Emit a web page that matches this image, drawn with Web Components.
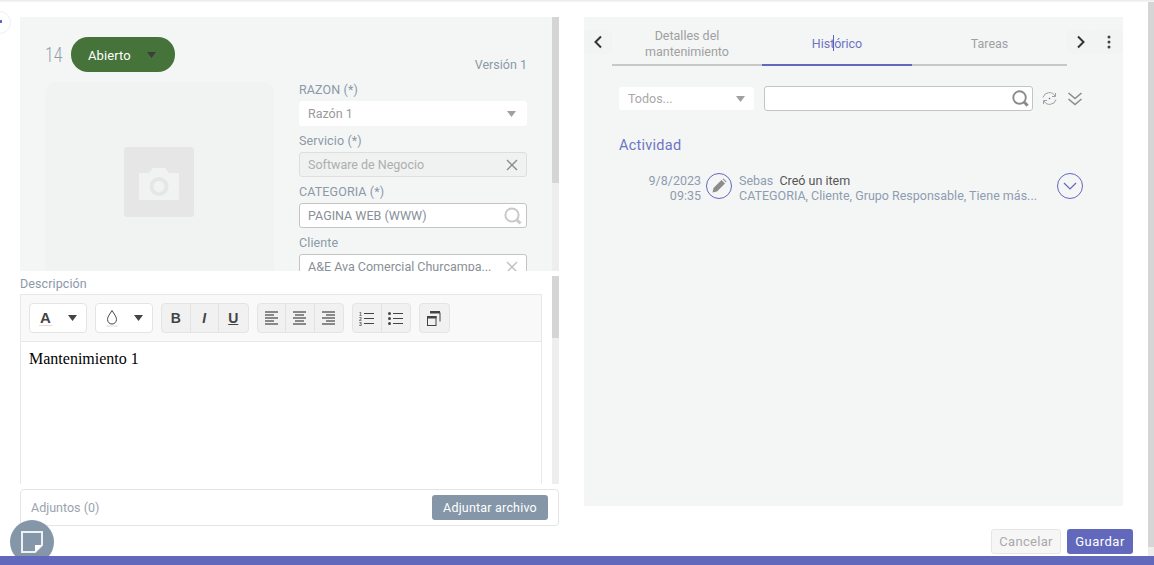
<!DOCTYPE html>
<html lang="es">
<head>
<meta charset="utf-8">
<title>Mantenimiento</title>
<style>
  html, body { margin: 0; height: 565px; overflow: hidden; background: #fff; }
  body { font-family: Roboto, "Liberation Sans", sans-serif; }
</style>
</head>
<body>
<app-shell>
  <form-card slot="left"></form-card>
  <rich-editor slot="left"></rich-editor>
  <attach-bar slot="left"></attach-bar>
  <history-panel slot="right"></history-panel>
</app-shell>

<script>
const ICONS = {
  search: `<svg width="20" height="20" viewBox="0 0 20 20" fill="none" stroke="currentColor"><circle cx="9" cy="9" r="6.6" stroke-width="2"/><path d="M14 14l3.5 3.5" stroke-width="3"/></svg>`,
  close: `<svg width="12" height="12" viewBox="0 0 12 12" fill="none" stroke="currentColor" stroke-width="1.4"><path d="M1 1l10 10M11 1L1 11"/></svg>`,
  caret: `<svg width="9" height="6" viewBox="0 0 9 6" fill="currentColor"><path d="M0 0h9L4.5 6z"/></svg>`
};

class AppShell extends HTMLElement {
  constructor() {
    super();
    this.attachShadow({ mode: 'open' });
    this.shadowRoot.innerHTML = `
      <style>
        :host { display: block; position: relative; width: 1154px; height: 565px; overflow: hidden; }
        .top { height: 2px; background: linear-gradient(#e9e9e9, #f8f8f8); }
        .body { display: flex; height: 554px; }
        .content { flex: 1; display: flex; flex-direction: column; padding: 15px 0 0 20px; }
        .cols { display: flex; gap: 25px; height: 509px; }
        .left { width: 539px; display: flex; flex-direction: column; }
        .right { width: 539px; }
        .actions { display: flex; justify-content: flex-end; gap: 6px; padding: 3px 15px 0 0; }
        button { height: 25px; border-radius: 3px; font: 400 13px Roboto, sans-serif; letter-spacing: .5px; padding: 0; }
        .cancel { width: 70px; background: #f6f6f6; border: 1px solid #e6e6e6; color: #a9a9a9; letter-spacing: .3px; }
        .save { width: 66px; background: #6268bb; border: 0; color: #fff; }
        .page-scroll { width: 6px; background: linear-gradient(#d5d5d5 0 545px, #ededed 545px); }
        .bar { height: 9px; background: #6268bb; position: relative; z-index: 2; }
        .fab { position: absolute; left: 10px; top: 520px; width: 44px; height: 44px; border-radius: 50%; background: #8496a8; display: flex; align-items: center; justify-content: center; }
        .dot { position: absolute; left: -12px; top: 11px; width: 21px; height: 21px; border-radius: 50%; border: 1px solid #eceef4; background: #fff; }
        .dot::after { content: ""; position: absolute; left: 11px; top: 8px; width: 2px; height: 3px; background: #5a6ad0; }
      </style>
      <div class="top"></div>
      <div class="body">
        <div class="content">
          <div class="cols">
            <div class="left"><slot name="left"></slot></div>
            <div class="right"><slot name="right"></slot></div>
          </div>
          <div class="actions">
            <button class="cancel">Cancelar</button>
            <button class="save">Guardar</button>
          </div>
        </div>
        <div class="page-scroll"></div>
      </div>
      <div class="bar"></div>
      <div class="dot"></div>
      <div class="fab">
        <svg width="22" height="22" viewBox="0 0 22 22"><path d="M1 1h20v13l-7 7H1z" fill="none" stroke="#eef1f3" stroke-width="2"/><path d="M21 14h-7v7z" fill="#fff"/></svg>
      </div>`;
  }
}

class FormField extends HTMLElement {
  constructor() {
    super();
    this.attachShadow({ mode: 'open' });
  }
  connectedCallback() {
    const type = this.getAttribute('type') || 'text';
    const icon = { select: ICONS.caret, disabled: ICONS.close, search: ICONS.search, clear: ICONS.close }[type];
    this.shadowRoot.innerHTML = `
      <style>
        :host { display: block; height: 51px; font-size: 12.5px; }
        label { display: block; height: 25px; line-height: 27px; color: #8b99a8; letter-spacing: .12px; }
        .box { box-sizing: border-box; height: 25px; display: flex; align-items: center; justify-content: space-between; padding: 0 8px; border-radius: 3px; background: #fff; border: 1px solid #fff; color: #9a9a9a; }
        :host([type=disabled]) .box { background: #f0f1f1; border-color: #dedede; color: #aeaeae; }
        :host([type=search]) .box, :host([type=clear]) .box { border-color: #c4c4c4; color: #888f98; }
        .icon { display: flex; color: #8c8c8c; }
        :host([type=select]) .icon { color: #a0a0a0; margin-right: 2px; }
        :host([type=search]) .icon { color: #c9c9c9; margin-right: -5px; }
        :host([type=clear]) .icon { color: #c0c0c0; }
      </style>
      <label><slot name="label"></slot></label>
      <div class="box"><span><slot></slot></span><span class="icon">${icon}</span></div>`;
  }
}

class FormCard extends HTMLElement {
  constructor() {
    super();
    this.attachShadow({ mode: 'open' });
    this.shadowRoot.innerHTML = `
      <style>
        :host { display: flex; height: 254px; flex: none; }
        .card { width: 532px; box-sizing: border-box; background: #f4f6f6; padding: 20px 25px 0; overflow: hidden; }
        .head { display: flex; align-items: center; height: 35px; }
        .num { font-size: 20px; font-weight: 300; color: #8c9caa; width: 26px; transform: scaleX(.78); transform-origin: left center; }
        .pill { width: 104px; height: 35px; box-sizing: border-box; border-radius: 17px; background: #45733a; color: #fff; display: flex; align-items: center; justify-content: space-between; padding: 1px 19px 0 17px; font-size: 13px; letter-spacing: .1px; }
        .pill svg { color: #3d3d3d; }
        .grid { display: flex; gap: 25px; margin-top: 10px; }
        .photo { width: 229px; height: 210px; border-radius: 10px; background: #f1f2f2; display: flex; padding: 65px 1px 0 0; box-sizing: border-box; justify-content: center; flex: none; }
        .shot { width: 70px; height: 70px; border-radius: 3px; background: #e6e6e6; display: flex; align-items: center; justify-content: center; }
        .fields { width: 228px; margin-top: -15px; }
        .ver { height: 14px; line-height: 14px; text-align: right; font-size: 12.5px; color: #8b99a8; margin-top: -9px; margin-bottom: 4px; }
        .scroll { width: 7px; background: linear-gradient(#d5d5d5 0 166px, #eeeeee 166px); }
      </style>
      <div class="card">
        <div class="head">
          <span class="num">14</span>
          <div class="pill"><span>Abierto</span>${ICONS.caret}</div>
        </div>
        <div class="grid">
          <div class="photo">
            <div class="shot">
              <svg width="40" height="37" viewBox="0 0 40 37"><path fill-rule="evenodd" fill="#f1f2f2" d="M1 9h9l3-4c.5-1 1-1 2-1h10c1 0 1.500 0 2 1l3 4h9c.5 0 1 .5 1 1v25c0 .5-.5 1-1 1H1c-.5 0-1-.5-1-1V10c0-.5.5-1 1-1zM20 13a9.500 9.500 0 1 0 0 19 9.500 9.500 0 0 0 0-19zm0 4a5.500 5.500 0 1 1 0 11 5.500 5.500 0 0 1 0-11z"/></svg>
            </div>
          </div>
          <div class="fields">
            <div class="ver">Versión 1</div>
            <form-field type="select"><span slot="label">RAZON (*)</span>Razón 1</form-field>
            <form-field type="disabled"><span slot="label">Servicio (*)</span>Software de Negocio</form-field>
            <form-field type="search"><span slot="label">CATEGORIA (*)</span>PAGINA WEB (WWW)</form-field>
            <form-field type="clear"><span slot="label">Cliente</span>A&amp;E Ava Comercial Churcampa...</form-field>
          </div>
        </div>
      </div>
      <div class="scroll"></div>`;
  }
}

class ToolGroup extends HTMLElement {
  constructor() {
    super();
    this.attachShadow({ mode: 'open' });
    this.shadowRoot.innerHTML = `
      <style>
        :host { display: inline-flex; height: 30px; box-sizing: border-box; border: 1px solid #e4e4e4; border-radius: 4px; background: #f1f1f1; }
        :host([plain]) { background: #fff; }
        ::slotted(span) { box-sizing: border-box; width: 28.5px; height: 100%; display: flex; align-items: center; justify-content: center; color: #444; }
        ::slotted(span:not(:last-child)) { border-right: 1px solid #e2e2e2; }
      </style>
      <slot></slot>`;
  }
}

const line = (rows) => `<svg width="15" height="14" viewBox="0 0 15 14" stroke="#444" stroke-width="1.2">${rows.map((r, i) => `<path d="M${r[0]} ${i * 3 + 1}H${r[1]}"/>`).join('')}</svg>`;

class RichEditor extends HTMLElement {
  constructor() {
    super();
    this.attachShadow({ mode: 'open' });
    this.shadowRoot.innerHTML = `
      <style>
        :host { display: flex; height: 208px; margin-top: 5px; flex: none; }
        .wrap { width: 532px; }
        .title { height: 18px; line-height: 16px; font-size: 12.5px; letter-spacing: .1px; color: #8b99a8; }
        .ed { box-sizing: border-box; width: 522px; height: 190px; border: 1px solid #e8e8e8; border-bottom: 0; }
        .bar { box-sizing: border-box; height: 47px; background: #f9f9f9; border-bottom: 1px solid #e8e8e8; display: flex; gap: 8px; padding: 8px 8px 0; }
        .a { font: 700 15px "Liberation Sans", sans-serif; color: #444; border-bottom: 1px solid #f0d5d5; line-height: 15px; padding: 0 1px; }
        .text { padding: 7px 8px; font: 16px/1.2 "Liberation Serif", serif; color: #000; }
        .scroll { width: 7px; background: linear-gradient(#d5d5d5 0 62px, #eeeeee 62px); }
        tool-group b, tool-group i, tool-group u { font-family: "Liberation Sans", sans-serif; font-size: 14px; font-weight: 700; }
        .num { font: 700 5px "Liberation Sans", sans-serif; fill: #555; }
      </style>
      <div class="wrap">
        <div class="title">Descripción</div>
        <div class="ed">
          <div class="bar">
            <tool-group plain><span style="width:56px;justify-content:space-between;padding:0 9px"><b class="a">A</b>${ICONS.caret}</span></tool-group>
            <tool-group plain><span style="width:56px;justify-content:space-between;padding:0 9px"><svg width="14" height="18" viewBox="0 0 14 18" fill="none" stroke="#445"><path d="M7 1.500C5 5 2.500 7.500 2.500 10.500a4.500 4.500 0 0 0 9 0C11.500 7.500 9 5 7 1.500z"/><path d="M1 17h12" stroke="#f0d5d5"/></svg>${ICONS.caret}</span></tool-group>
            <tool-group>
              <span><b>B</b></span><span><i>I</i></span><span><u>U</u></span>
            </tool-group>
            <tool-group>
              <span>${line([[1,14],[1,10],[1,14],[1,10],[1,14]])}</span><span>${line([[1,14],[3,12],[1,14],[3,12],[1,14]])}</span><span>${line([[1,14],[5,14],[1,14],[5,14],[1,14]])}</span>
            </tool-group>
            <tool-group>
              <span><svg width="15" height="15" viewBox="0 0 15 15"><g stroke="#444" stroke-width="1.1"><path d="M5 2.500H15M5 7.500H15M5 12.500H15"/></g><text class="num" x="0" y="5">1</text><text class="num" x="0" y="10">2</text><text class="num" x="0" y="15">3</text></svg></span>
              <span><svg width="15" height="15" viewBox="0 0 15 15"><g stroke="#444" stroke-width="1.1"><path d="M5 2.500H15M5 7.500H15M5 12.500H15"/></g><g fill="#444"><circle cx="1.500" cy="2.500" r="1.500"/><circle cx="1.500" cy="7.500" r="1.500"/><circle cx="1.500" cy="12.500" r="1.500"/></g></svg></span>
            </tool-group>
            <tool-group>
              <span><svg width="14" height="15" viewBox="0 0 14 15" fill="none" stroke="#444"><path d="M3 1.500h10v9" stroke-width="1"/><path d="M3 0h10v2.500H3z" fill="#444" stroke="none"/><rect x=".5" y="5.500" width="8.500" height="9"/><path d="M0 5h9.500v2.500H0z" fill="#444" stroke="none"/></svg></span>
            </tool-group>
          </div>
          <div class="text">Mantenimiento 1</div>
        </div>
      </div>
      <div class="scroll"></div>`;
  }
}

class AttachBar extends HTMLElement {
  constructor() {
    super();
    this.attachShadow({ mode: 'open' });
    this.shadowRoot.innerHTML = `
      <style>
        :host { display: flex; align-items: center; justify-content: space-between; box-sizing: border-box; height: 37px; margin-top: 5px; padding: 0 10px; border: 1px solid #e4e4e4; border-radius: 4px; font-size: 12.5px; color: #9aa3ad; flex: none; }
        button { width: 116px; height: 25px; border: 0; border-radius: 3px; background: #8496a8; color: #fff; font: 400 12.5px Roboto, sans-serif; letter-spacing: .2px; padding: 0; }
      </style>
      <span>Adjuntos (0)</span>
      <button>Adjuntar archivo</button>`;
  }
}

class HistoryPanel extends HTMLElement {
  constructor() {
    super();
    this.attachShadow({ mode: 'open' });
    this.shadowRoot.innerHTML = `
      <style>
        :host { display: block; position: relative; box-sizing: border-box; height: 489px; background: #f4f6f6; font-size: 12.5px; }
        .tabs { display: flex; height: 49px; }
        .nav { width: 28px; margin-top: 13px; height: 24px; display: flex; align-items: center; justify-content: center; background: #f2f4f4; border-radius: 3px; flex: none; }
        .strip { display: flex; width: 455px; }
        .tab { box-sizing: border-box; height: 49px; display: flex; align-items: flex-end; justify-content: center; text-align: center; color: #a0a0a0; border-bottom: 2px solid #c8c8c8; line-height: 16px; width: 150px; padding: 0 0 4px; }
        .tab.on { color: #6d74c2; border-bottom-color: #6268bb; padding-bottom: 12px; }
        .tab.one { padding-bottom: 12px; width: 155px; }
        .caret { position: absolute; left: 249px; top: 18px; width: 1px; height: 16px; background: #5a62b8; }
        .filters { display: flex; align-items: center; padding: 20px 0 0 35px; height: 25px; }
        .sel { box-sizing: border-box; width: 135px; height: 23px; background: #fff; border-radius: 3px; display: flex; align-items: center; justify-content: space-between; padding: 0 9px; color: #a8a8a8; }
        .sel svg { color: #a0a0a0; }
        .q { box-sizing: border-box; width: 269px; height: 25px; margin-left: 10px; background: #fff; border: 1px solid #c4c4c4; border-radius: 3px; display: flex; align-items: center; justify-content: flex-end; padding-right: 2px; color: #8a8a8a; }
        .ic { display: flex; margin-left: 8px; }
        h2 { margin: 26px 0 0 35px; font-size: 14.5px; line-height: 18px; font-weight: 400; color: #6d74c2; letter-spacing: .25px; }
        .item { display: flex; margin: 18px 0 0 0; padding-left: 35px; }
        .when { width: 82px; text-align: right; line-height: 15px; color: #8f9cb0; flex: none; }
        .badge, .more { width: 26px; height: 26px; box-sizing: border-box; border: 1px solid #6268bb; border-radius: 50%; display: flex; align-items: center; justify-content: center; flex: none; }
        .badge { margin-left: 5px; }
        .txt { margin-left: 7px; width: 318px; line-height: 15px; color: #8f9cb0; white-space: nowrap; }
        .txt em { font-style: normal; color: #555; margin-left: 3px; }
      </style>
      <div class="tabs">
        <div class="nav"><svg width="10" height="14" viewBox="0 0 10 14" fill="none" stroke="#333" stroke-width="2"><path d="M8 1.500L2.500 7 8 12.500"/></svg></div>
        <div class="strip">
          <div class="tab">Detalles del<br>mantenimiento</div>
          <div class="tab on">Histórico</div>
          <div class="tab one">Tareas</div>
        </div>
        <div class="nav"><svg width="10" height="14" viewBox="0 0 10 14" fill="none" stroke="#333" stroke-width="2"><path d="M2 1.500L7.500 7 2 12.500"/></svg></div>
        <div class="nav"><svg width="4" height="14" viewBox="0 0 4 14" fill="#444"><circle cx="2" cy="2" r="1.500"/><circle cx="2" cy="7" r="1.500"/><circle cx="2" cy="12" r="1.500"/></svg></div>
      </div>
      <div class="caret"></div>
      <div class="filters">
        <div class="sel"><span>Todos...</span>${ICONS.caret}</div>
        <div class="q">${ICONS.search.replace('width="20" height="20"', 'width="19" height="19"')}</div>
        <span class="ic"><svg width="17" height="15" viewBox="0 0 17 15" fill="none" stroke="#a0a0a0" stroke-width="1"><path d="M2 6.500A6.500 6.500 0 0 1 14 5"/><path d="M15 8.500A6.500 6.500 0 0 1 3 10"/><path d="M14.500 2v3.500H11M2.500 13V9.500H6"/><circle cx="8.500" cy="7.500" r=".8" fill="#6268bb" stroke="none"/></svg></span>
        <span class="ic" style="margin-left:9px"><svg width="16" height="15" viewBox="0 0 16 15" fill="none" stroke="#8c8c8c" stroke-width="1.600"><path d="M1.500 2l6.500 5.500L14.500 2M1.500 8l6.500 5.500L14.500 8"/></svg></span>
      </div>
      <h2>Actividad</h2>
      <div class="item">
        <div class="when">9/8/2023<br>09:35</div>
        <div class="badge"><svg width="16" height="16" viewBox="0 0 16 16" fill="#8c8c8c"><path d="M10.500 2l3.500 3.500-8 8-4.500 1 1-4.500zM11.500 1l1-.5 3 3-.5 1z"/></svg></div>
        <div class="txt"><div>Sebas <em>Creó un item</em></div><div>CATEGORIA, Cliente, Grupo Responsable, Tiene más...</div></div>
        <div class="more"><svg width="14" height="8" viewBox="0 0 14 8" fill="none" stroke="#6268bb" stroke-width="1.200"><path d="M1 1l6 6 6-6"/></svg></div>
      </div>`;
  }
}

customElements.define('tool-group', ToolGroup);
customElements.define('form-field', FormField);
customElements.define('form-card', FormCard);
customElements.define('rich-editor', RichEditor);
customElements.define('attach-bar', AttachBar);
customElements.define('history-panel', HistoryPanel);
customElements.define('app-shell', AppShell);
</script>
</body>
</html>
